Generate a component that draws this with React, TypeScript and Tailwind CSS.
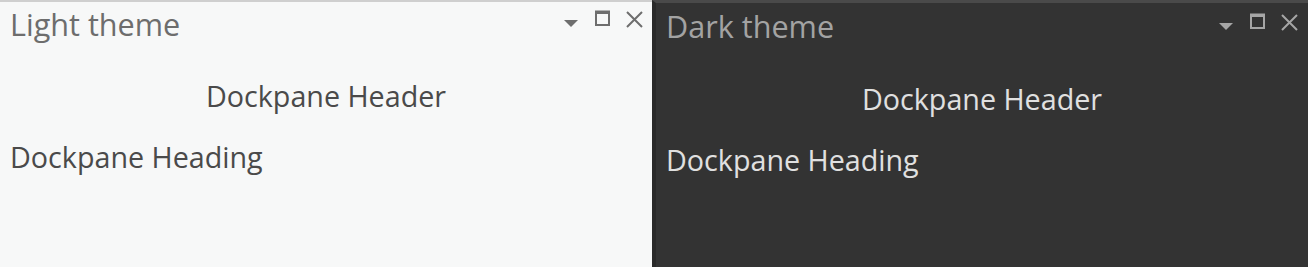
import React from 'react'

const Caret = ({ className }: { className: string }) => (
  <svg width="14" height="7" viewBox="0 0 14 7" className={className}>
    <path d="M0 0H14L7 7Z" fill="currentColor" />
  </svg>
)

const Maximize = ({ className }: { className: string }) => (
  <svg width="15" height="16" viewBox="0 0 15 16" className={className}>
    <rect x="1" y="1.5" width="13" height="13.5" fill="none" stroke="currentColor" strokeWidth="2" />
    <rect x="1" y="1" width="13" height="3" fill="currentColor" />
  </svg>
)

const Close = ({ className }: { className: string }) => (
  <svg width="17" height="17" viewBox="0 0 17 17" className={className}>
    <path d="M1 1L16 16M16 1L1 16" stroke="currentColor" strokeWidth="2" />
  </svg>
)

interface PaneProps {
  title: string
  dark?: boolean
}

const Dockpane = ({ title, dark }: PaneProps) => {
  return (
    <div
      className={
        dark
          ? 'flex-1 h-full flex flex-col bg-[#333333] border-t-[3px] border-[#4a4a4a] border-l-4 border-l-[#2a2a2a]'
          : 'w-[652px] h-full flex flex-col bg-[#f7f8f8] border-t-2 border-[#cfcfcf]'
      }
    >
      {/* title bar */}
      <div className="flex flex-row items-start justify-between h-[44px]">
        <h1 className={dark ? 'pl-[10px] pt-[3px] text-[30.6px] leading-[40px] text-[#a3a3a3]' : 'pl-[10px] pt-[2px] text-[30.6px] leading-[40px] text-[#6d6d6d]'}>
          {title}
        </h1>
        <div className={dark ? 'flex flex-row items-start pt-[10px] pr-[10px] text-[#a6a6a6]' : 'flex flex-row items-start pt-[8px] pr-[9px] text-[#6e6e6e]'}>
          <Caret className="mt-[10px]" />
          <Maximize className="ml-[17px]" />
          <Close className="ml-[16px] mt-[1px]" />
        </div>
      </div>
      <div className={dark ? 'mt-[32px] text-center text-[28.7px] leading-[40px] text-[#e0e0e0]' : 'mt-[30px] text-center text-[28.7px] leading-[40px] text-[#4a4a4a]'}>
        Dockpane Header
      </div>
      <div className={dark ? 'mt-[21px] pl-[10px] text-[28.7px] leading-[40px] text-[#e0e0e0]' : 'mt-[21px] pl-[10px] text-[28.7px] leading-[40px] text-[#4a4a4a]'}>
        Dockpane Heading
      </div>
    </div>
  )
}

export default function App() {
  return (
    <div className="w-[1308px] h-[267px] flex flex-row font-['Open_Sans',sans-serif] overflow-hidden">
      <Dockpane title="Light theme" />
      <Dockpane title="Dark theme" dark />
    </div>
  )
}
